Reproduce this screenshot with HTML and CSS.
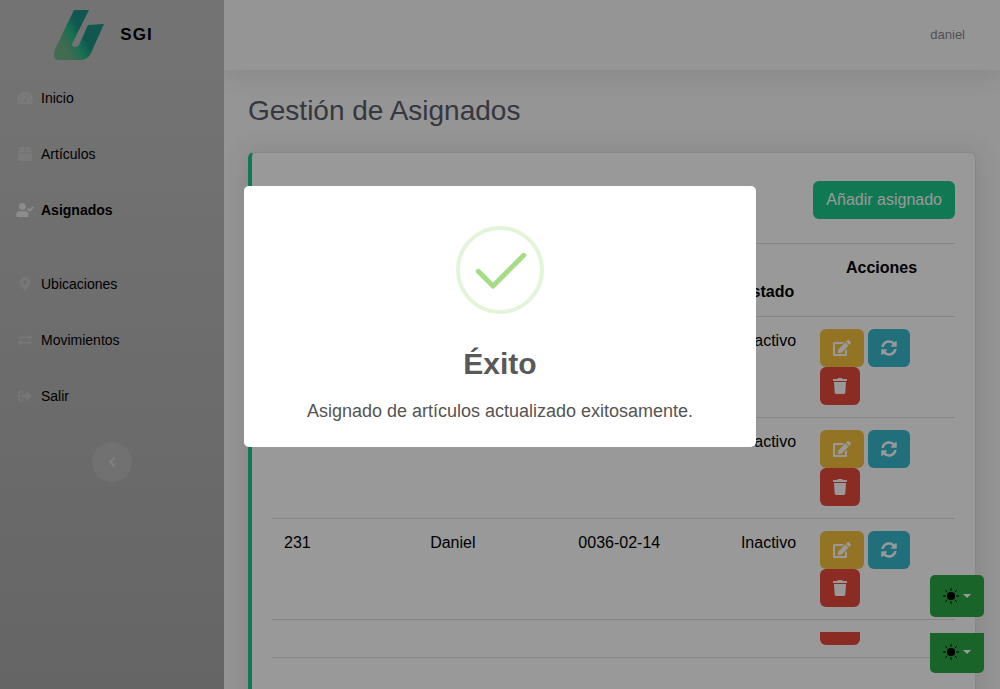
FILE: index.html
```html
<!DOCTYPE html>
<html lang="es">
<head>
<meta charset="utf-8">
<meta name="viewport" content="width=device-width, initial-scale=1">
<title>Gestión de Asignados</title>
<link rel="stylesheet" href="styles.css">
</head>
<body>
<svg class="sprite" aria-hidden="true">
  <symbol id="i-gauge" viewBox="0 0 576 512"><path d="M288 32C128.94 32 0 160.94 0 320c0 52.8 14.25 102.26 39.06 144.8 5.61 9.62 16.3 15.2 27.44 15.2h443c11.14 0 21.83-5.58 27.44-15.2C561.75 422.26 576 372.8 576 320c0-159.06-128.94-288-288-288zm0 64c14.71 0 26.58 10.13 30.32 23.65-1.11 2.26-2.64 4.23-3.45 6.67l-9.22 27.67c-5.13 3.49-10.97 6.01-17.64 6.01-17.67 0-32-14.33-32-32S270.33 96 288 96zM96 384c-17.67 0-32-14.33-32-32s14.33-32 32-32 32 14.33 32 32-14.33 32-32 32zm48-160c-17.67 0-32-14.33-32-32s14.33-32 32-32 32 14.33 32 32-14.33 32-32 32zm246.77-72.41l-61.33 184C343.13 347.33 352 364.54 352 384c0 11.72-3.38 22.55-8.88 32H232.88c-5.5-9.45-8.88-20.28-8.88-32 0-33.94 26.5-61.43 59.9-63.59l61.34-184.01c4.17-12.56 17.73-19.45 30.36-15.17 12.57 4.19 19.35 17.79 15.17 30.36zm14.66 57.2l15.52-46.55c3.47-1.29 7.13-2.23 11.05-2.23 17.67 0 32 14.33 32 32s-14.33 32-32 32c-11.38-.01-20.89-6.28-26.57-15.22zM480 384c-17.67 0-32-14.33-32-32s14.33-32 32-32 32 14.33 32 32-14.33 32-32 32z"/></symbol>
  <symbol id="i-box" viewBox="0 0 512 512"><path d="M509.5 184.6L458.9 32.8C452.4 13.2 434.1 0 413.4 0H272v192h238.7c-.4-2.5-.4-5-1.2-7.4zM240 0H98.6c-20.7 0-39 13.2-45.5 32.8L2.5 184.6c-.8 2.4-.8 4.9-1.2 7.4H240V0zM0 224v240c0 26.5 21.5 48 48 48h416c26.5 0 48-21.5 48-48V224H0z"/></symbol>
  <symbol id="i-user-check" viewBox="0 0 640 512"><path d="M224 256c70.7 0 128-57.3 128-128S294.7 0 224 0 96 57.3 96 128s57.3 128 128 128zm89.6 32h-16.7c-22.2 10.2-46.9 16-72.9 16s-50.6-5.8-72.9-16h-16.7C60.2 288 0 348.2 0 422.4V464c0 26.5 21.5 48 48 48h352c26.5 0 48-21.5 48-48v-41.6c0-74.2-60.2-134.4-134.4-134.4zm323-128.4l-27.8-28.1c-4.6-4.7-12.1-4.7-16.8-.1l-104.8 104-45.5-45.8c-4.6-4.7-12.1-4.7-16.8-.1l-28.1 27.9c-4.7 4.6-4.7 12.1-.1 16.8l81.7 82.3c4.6 4.7 12.1 4.7 16.8.1l141.3-140.2c4.6-4.7 4.7-12.2.1-16.8z"/></symbol>
  <symbol id="i-marker" viewBox="0 0 384 512"><path d="M172.268 501.67C26.97 291.031 0 269.413 0 192 0 85.961 85.961 0 192 0s192 85.961 192 192c0 77.413-26.97 99.031-172.268 309.67-9.535 13.774-29.93 13.773-39.464 0zM192 272c44.183 0 80-35.817 80-80s-35.817-80-80-80-80 35.817-80 80 35.817 80 80 80z"/></symbol>
  <symbol id="i-exchange" viewBox="0 0 512 512"><path d="M0 168v-16c0-13.255 10.745-24 24-24h360V80c0-21.367 25.899-32.042 40.971-16.971l80 80c9.372 9.373 9.372 24.569 0 33.941l-80 80C409.956 271.982 384 261.456 384 240v-48H24c-13.255 0-24-10.745-24-24zm488 152H128v-48c0-21.314-25.862-32.08-40.971-16.971l-80 80c-9.372 9.373-9.372 24.569 0 33.941l80 80C102.057 463.997 128 453.437 128 432v-48h360c13.255 0 24-10.745 24-24v-16c0-13.255-10.745-24-24-24z"/></symbol>
  <symbol id="i-signout" viewBox="0 0 512 512"><path d="M497 273L329 441c-15 15-41 4.5-41-17v-96H152c-13.3 0-24-10.7-24-24v-96c0-13.3 10.7-24 24-24h136V88c0-21.4 25.9-32 41-17l168 168c9.3 9.4 9.3 24.6 0 34zM192 436v-40c0-6.6-5.4-12-12-12H96c-17.7 0-32-14.3-32-32V160c0-17.7 14.3-32 32-32h84c6.6 0 12-5.4 12-12V76c0-6.6-5.4-12-12-12H96c-53 0-96 43-96 96v192c0 53 43 96 96 96h84c6.6 0 12-5.4 12-12z"/></symbol>
  <symbol id="i-angle" viewBox="0 0 256 512"><path d="M31.7 239l136-136c9.4-9.4 24.6-9.4 33.9 0l22.6 22.6c9.4 9.4 9.4 24.6 0 33.9L127.9 256l96.4 96.4c9.4 9.4 9.4 24.6 0 33.9L201.7 409c-9.4 9.4-24.6 9.4-33.9 0l-136-136c-9.5-9.4-9.5-24.6-.1-34z"/></symbol>
  <symbol id="i-edit" viewBox="0 0 576 512"><path d="M402.6 83.2l90.2 90.2c3.8 3.8 3.8 10 0 13.8L274.4 405.6l-92.8 10.3c-12.4 1.4-22.9-9.1-21.5-21.5l10.3-92.8L388.8 83.2c3.8-3.8 10-3.8 13.8 0zm162-22.9l-48.8-48.8c-15.2-15.2-39.9-15.2-55.2 0l-35.4 35.4c-3.8 3.8-3.8 10 0 13.8l90.2 90.2c3.8 3.8 10 3.8 13.8 0l35.4-35.4c15.2-15.3 15.2-40 0-55.2zM384 346.2V448H64V128h229.8c3.2 0 6.2-1.3 8.5-3.5l40-40c7.6-7.6 2.2-20.5-8.5-20.5H48C21.5 64 0 85.5 0 112v352c0 26.5 21.5 48 48 48h352c26.5 0 48-21.5 48-48V306.2c0-10.7-12.9-16-20.5-8.5l-40 40c-2.2 2.3-3.5 5.3-3.5 8.5z"/></symbol>
  <symbol id="i-sync" viewBox="0 0 512 512"><path d="M370.72 133.28C339.458 104.008 298.888 87.962 255.848 88c-77.458.068-144.328 53.178-162.791 126.85-1.344 5.363-6.122 9.15-11.651 9.15H24.103c-7.498 0-13.194-6.807-11.807-14.176C33.933 94.924 134.813 8 256 8c66.448 0 126.791 26.136 171.315 68.685L463.03 40.97C478.149 25.851 504 36.559 504 57.941V192c0 13.255-10.745 24-24 24H345.941c-21.382 0-32.09-25.851-16.971-40.971l41.75-41.749zM32 296h134.059c21.382 0 32.09 25.851 16.971 40.971l-41.75 41.75c31.262 29.273 71.835 45.319 114.876 45.28 77.418-.07 144.315-53.144 162.787-126.849 1.344-5.363 6.122-9.15 11.651-9.15h57.304c7.498 0 13.194 6.807 11.807 14.176C478.067 417.076 377.187 504 256 504c-66.448 0-126.791-26.136-171.315-68.685L48.97 471.03C33.851 486.149 8 475.441 8 454.059V320c0-13.255 10.745-24 24-24z"/></symbol>
  <symbol id="i-trash" viewBox="0 0 448 512"><path d="M432 32H312l-9.4-18.7A24 24 0 0 0 281.1 0H166.8a23.72 23.72 0 0 0-21.4 13.3L136 32H16A16 16 0 0 0 0 48v32a16 16 0 0 0 16 16h416a16 16 0 0 0 16-16V48a16 16 0 0 0-16-16zM53.2 467a48 48 0 0 0 47.9 45h245.8a48 48 0 0 0 47.9-45L416 128H32z"/></symbol>
  <symbol id="i-sun" viewBox="0 0 16 16"><circle cx="8" cy="8" r="4"/><path d="M8 .5v2M8 13.5v2M.5 8h2M13.500 8h2M2.700 2.700l1.400 1.400M11.900 11.900l1.400 1.400M2.700 13.300l1.400-1.400M11.900 4.100l1.400-1.400" fill="none" stroke="currentColor" stroke-width="1" stroke-linecap="round"/></symbol>
</svg>

<div class="layout">
  <aside class="sidebar">
    <a class="brand" href="#">
      <svg class="brand-logo" viewBox="0 0 50 50" aria-hidden="true">
        <defs>
          <linearGradient id="leaf" gradientUnits="userSpaceOnUse" x1="8" y1="42" x2="34" y2="27">
            <stop offset="0.15" stop-color="#70b286"/>
            <stop offset="0.6" stop-color="#25b98a"/>
            <stop offset="0.9" stop-color="#1b9184"/>
          </linearGradient>
        </defs>
        <path fill="url(#leaf)" d="M20 0H35L18.500 33Q17 37 21 37Q24 37 25 35L34 15L50 14L37 43Q33.500 50 27 50H5Q0 50 0 45Q0 42 1.500 38Z"/>
      </svg>
      <span>SGI</span>
    </a>
    <nav>
      <a class="nav-link" href="#"><svg class="nav-icon"><use href="#i-gauge"/></svg>Inicio</a>
      <a class="nav-link" href="#"><svg class="nav-icon"><use href="#i-box"/></svg>Artículos</a>
      <a class="nav-link active" href="#"><svg class="nav-icon"><use href="#i-user-check"/></svg>Asignados</a>
      <hr class="divider">
      <a class="nav-link" href="#"><svg class="nav-icon"><use href="#i-marker"/></svg>Ubicaciones</a>
      <a class="nav-link" href="#"><svg class="nav-icon"><use href="#i-exchange"/></svg>Movimientos</a>
      <a class="nav-link" href="#"><svg class="nav-icon"><use href="#i-signout"/></svg>Salir</a>
      <hr class="divider">
    </nav>
    <button class="collapse" type="button" aria-label="Contraer menú"><svg class="collapse-icon"><use href="#i-angle"/></svg></button>
  </aside>

  <div class="content">
    <header class="topbar"><a class="user" href="#">daniel</a></header>
    <main class="main">
      <h1 class="title">Gestión de Asignados</h1>
      <section class="card">
        <div class="toolbar"><button class="btn btn-add" type="button">Añadir asignado</button></div>
        <table class="table">
          <colgroup><col class="c-id"><col class="c-name"><col class="c-date"><col class="c-state"><col class="c-actions"></colgroup>
          <thead>
            <tr><th>Id</th><th>Nombre</th><th>Fecha</th><th>Estado</th><th class="th-actions">Acciones</th></tr>
          </thead>
          <tbody>
            <tr>
              <td>229</td><td>Daniel</td><td>0036-02-14</td><td>Inactivo</td>
              <td><div class="actions">
                <button class="btn edit" type="button" aria-label="Editar"><svg class="icon-wide"><use href="#i-edit"/></svg></button>
                <button class="btn sync" type="button" aria-label="Actualizar"><svg class="icon"><use href="#i-sync"/></svg></button>
                <button class="btn trash" type="button" aria-label="Eliminar"><svg class="icon-slim"><use href="#i-trash"/></svg></button>
              </div></td>
            </tr>
            <tr>
              <td></td><td></td><td></td><td>Inactivo</td>
              <td><div class="actions">
                <button class="btn edit" type="button" aria-label="Editar"><svg class="icon-wide"><use href="#i-edit"/></svg></button>
                <button class="btn sync" type="button" aria-label="Actualizar"><svg class="icon"><use href="#i-sync"/></svg></button>
                <button class="btn trash" type="button" aria-label="Eliminar"><svg class="icon-slim"><use href="#i-trash"/></svg></button>
              </div></td>
            </tr>
            <tr>
              <td>231</td><td>Daniel</td><td>0036-02-14</td><td>Inactivo</td>
              <td><div class="actions">
                <button class="btn edit" type="button" aria-label="Editar"><svg class="icon-wide"><use href="#i-edit"/></svg></button>
                <button class="btn sync" type="button" aria-label="Actualizar"><svg class="icon"><use href="#i-sync"/></svg></button>
                <button class="btn trash" type="button" aria-label="Eliminar"><svg class="icon-slim"><use href="#i-trash"/></svg></button>
              </div></td>
            </tr>
            <tr class="row-short">
              <td></td><td></td><td></td><td></td>
              <td><button class="btn trash trash-short" type="button" aria-label="Eliminar"></button></td>
            </tr>
            <tr class="row-blank"><td></td><td></td><td></td><td></td><td></td></tr>
          </tbody>
        </table>
      </section>
    </main>
  </div>
</div>

<div class="themes">
  <button class="theme" type="button" aria-label="Cambiar tema"><svg class="icon"><use href="#i-sun"/></svg><span class="caret"></span></button>
  <button class="theme theme-flat" type="button" aria-label="Cambiar tema"><svg class="icon"><use href="#i-sun"/></svg><span class="caret"></span></button>
</div>

<div class="backdrop">
  <div class="modal" role="dialog" aria-modal="true" aria-labelledby="modal-title">
    <svg class="success" viewBox="0 0 88 88" aria-hidden="true">
      <circle cx="44" cy="44" r="42" fill="none" stroke="#a5dc86" stroke-opacity=".3" stroke-width="4"/>
      <path d="M22.300 45.300L37 60L67.700 29.300" fill="none" stroke="#a5dc86" stroke-width="5" stroke-linecap="round" stroke-linejoin="round"/>
    </svg>
    <h2 class="modal-title" id="modal-title">Éxito</h2>
    <p class="modal-text">Asignado de artículos actualizado exitosamente.</p>
  </div>
</div>
</body>
</html>
```
FILE: styles.css
```css
* { box-sizing: border-box; }

body {
  margin: 0;
  height: 100vh;
  overflow: hidden;
  background: #f8f8f9;
  color: #000;
  font: 16px/24px "Liberation Sans", Arial, sans-serif;
}

a { color: inherit; text-decoration: none; }
button { font: inherit; border: 0; cursor: pointer; }
svg { display: block; fill: currentColor; }
.sprite { display: none; }

.layout { display: flex; height: 100vh; }

.sidebar {
  flex: none;
  width: 224px;
  background: linear-gradient(180deg, #c0c0c0 10%, #a9a9a9 100%);
}

.brand {
  display: flex;
  align-items: center;
  justify-content: center;
  gap: 16px;
  height: 70px;
  padding-right: 17px;
  font-size: 17px;
  font-weight: 800;
  letter-spacing: 1px;
}
.brand-logo { width: 50px; height: 50px; }

.nav-link {
  display: flex;
  align-items: center;
  gap: 7px;
  padding: 16px;
  font-size: 14px;
}
.nav-icon { width: 18px; height: 14px; color: rgba(255, 255, 255, .22); }
.active { font-weight: 700; }
.active .nav-icon { color: rgba(255, 255, 255, .7); }

.divider {
  height: 1px;
  margin: 1px 16px 16px;
  border: 0;
  background: rgba(255, 255, 255, .05);
}

.collapse {
  display: grid;
  place-items: center;
  width: 40px;
  height: 40px;
  margin: 0 auto;
  padding: 0;
  border-radius: 50%;
  background: rgba(255, 255, 255, .15);
  color: rgba(255, 255, 255, .35);
}
.collapse-icon { width: 8px; height: 16px; }

.content { flex: 1; min-width: 0; overflow: hidden; }

.topbar {
  display: flex;
  align-items: center;
  justify-content: flex-end;
  height: 70px;
  padding: 0 35px;
  background: #f8f8f8;
  box-shadow: 0 2px 28px rgba(58, 59, 69, .15);
}
.user { color: #858796; font-size: 13px; }

.main { padding: 24px; }

.title {
  margin: 0 0 24px;
  color: #5a5c69;
  font-size: 28px;
  line-height: 34px;
  font-weight: 400;
}

.card {
  padding: 28px 20px;
  border: 1px solid #e1e2e6;
  border-left: 4px solid #1cc88a;
  border-radius: 6px;
  background: #fff;
  box-shadow: 0 2px 28px rgba(58, 59, 69, .15);
}

.toolbar { display: flex; justify-content: flex-end; margin-bottom: 24px; }

.btn {
  height: 38px;
  padding: 0 13px;
  border-radius: 6px;
  color: #fff;
}
.btn-add { background: #1cc88a; }
.edit { background: #f6c23e; }
.sync { background: #36b9cc; }
.trash { background: #e74a3b; }

.icon { width: 16px; height: 16px; }
.icon-wide { width: 18px; height: 16px; }
.icon-slim { width: 14px; height: 16px; }

.table { width: 100%; table-layout: fixed; border-spacing: 0; }
.c-id { width: 21.4%; }
.c-name { width: 21.7%; }
.c-date { width: 23.8%; }
.c-state { width: 11.6%; }
.c-actions { width: 21.5%; }

th, td { padding: 12px; border-top: 1px solid #dddfe3; text-align: left; }
th { height: 73px; vertical-align: bottom; }
td { vertical-align: top; }
.th-actions { text-align: center; vertical-align: top; }

.actions { display: flex; flex-wrap: wrap; gap: 0 4px; }

.row-short td { line-height: 0; }
.trash-short { width: 40px; height: 13px; border-radius: 0 0 6px 6px; }
.row-blank td { height: 101px; }

.themes {
  position: fixed;
  right: 16px;
  bottom: 16px;
  display: flex;
  flex-direction: column;
  gap: 16px;
}
.theme {
  display: flex;
  align-items: center;
  gap: 4px;
  height: 42px;
  padding: 0 13px;
  border-radius: 5px;
  background: #28a745;
  color: #000;
}
.theme-flat { height: 40px; padding-bottom: 2px; border-radius: 0 0 5px 5px; }
.caret {
  border: 4px solid transparent;
  border-top-color: #fff;
  border-bottom: 0;
}

.backdrop {
  position: fixed;
  inset: 0;
  display: grid;
  place-items: center;
  padding-bottom: 56px;
  background: rgba(0, 0, 0, .4);
}

.modal {
  width: 512px;
  max-width: 100%;
  padding: 40px 24px 24px;
  border-radius: 5px;
  background: #fff;
  text-align: center;
}
.success { width: 88px; height: 88px; margin: 0 auto 32px; }
.modal-title {
  margin: 0 0 17px;
  color: #595959;
  font-size: 30px;
  line-height: 36px;
}
.modal-text { margin: 0; color: #545454; font-size: 18px; }
```
